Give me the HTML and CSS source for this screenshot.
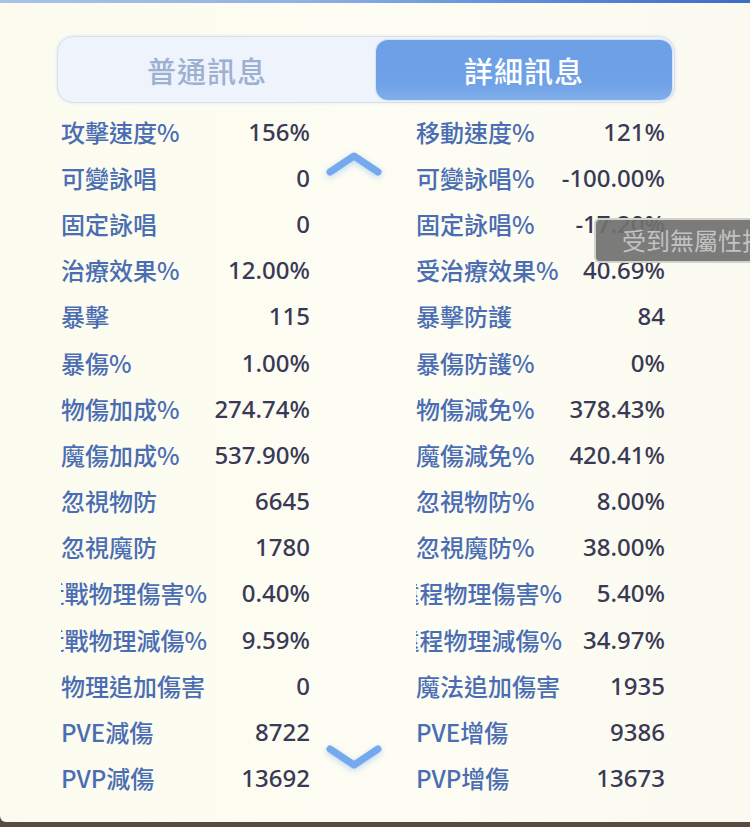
FILE: index.html
```html
<!DOCTYPE html>
<html lang="zh-Hant">
<head>
<meta charset="utf-8">
<title>詳細訊息</title>
<link rel="stylesheet" href="styles.css">
</head>
<body>
<div class="topbar"></div>
<div class="panel">
  <div class="tabs">
    <div class="tab">普通訊息</div>
    <div class="tab active">詳細訊息</div>
  </div>
  <div class="stats">
    <div class="col">
      <div class="row"><span class="label">攻擊速度%</span><span class="value">156%</span></div>
      <div class="row"><span class="label">可變詠唱</span><span class="value">0</span></div>
      <div class="row"><span class="label">固定詠唱</span><span class="value">0</span></div>
      <div class="row"><span class="label">治療效果%</span><span class="value">12.00%</span></div>
      <div class="row"><span class="label">暴擊</span><span class="value">115</span></div>
      <div class="row"><span class="label">暴傷%</span><span class="value">1.00%</span></div>
      <div class="row"><span class="label">物傷加成%</span><span class="value">274.74%</span></div>
      <div class="row"><span class="label">魔傷加成%</span><span class="value">537.90%</span></div>
      <div class="row"><span class="label">忽視物防</span><span class="value">6645</span></div>
      <div class="row"><span class="label">忽視魔防</span><span class="value">1780</span></div>
      <div class="row"><span class="label clip"><span>近戰物理傷害%</span></span><span class="value">0.40%</span></div>
      <div class="row"><span class="label clip"><span>近戰物理減傷%</span></span><span class="value">9.59%</span></div>
      <div class="row"><span class="label">物理追加傷害</span><span class="value">0</span></div>
      <div class="row"><span class="label">PVE減傷</span><span class="value">8722</span></div>
      <div class="row"><span class="label">PVP減傷</span><span class="value">13692</span></div>
    </div>
    <div class="arrows">
      <svg class="chev up" width="60" height="34" viewBox="0 0 60 34"><path d="M6 26 L30 10 L54 26" fill="none" stroke="#74a9ee" stroke-width="7" stroke-linecap="round" stroke-linejoin="round"/></svg>
      <svg class="chev down" width="60" height="34" viewBox="0 0 60 34"><path d="M6 8 L30 24 L54 8" fill="none" stroke="#74a9ee" stroke-width="7" stroke-linecap="round" stroke-linejoin="round"/></svg>
    </div>
    <div class="col">
      <div class="row"><span class="label">移動速度%</span><span class="value">121%</span></div>
      <div class="row"><span class="label">可變詠唱%</span><span class="value">-100.00%</span></div>
      <div class="row"><span class="label">固定詠唱%</span><span class="value">-17.20%</span></div>
      <div class="row"><span class="label">受治療效果%</span><span class="value">40.69%</span></div>
      <div class="row"><span class="label">暴擊防護</span><span class="value">84</span></div>
      <div class="row"><span class="label">暴傷防護%</span><span class="value">0%</span></div>
      <div class="row"><span class="label">物傷減免%</span><span class="value">378.43%</span></div>
      <div class="row"><span class="label">魔傷減免%</span><span class="value">420.41%</span></div>
      <div class="row"><span class="label">忽視物防%</span><span class="value">8.00%</span></div>
      <div class="row"><span class="label">忽視魔防%</span><span class="value">38.00%</span></div>
      <div class="row"><span class="label clip"><span>遠程物理傷害%</span></span><span class="value">5.40%</span></div>
      <div class="row"><span class="label clip"><span>遠程物理減傷%</span></span><span class="value">34.97%</span></div>
      <div class="row"><span class="label">魔法追加傷害</span><span class="value">1935</span></div>
      <div class="row"><span class="label">PVE增傷</span><span class="value">9386</span></div>
      <div class="row"><span class="label">PVP增傷</span><span class="value">13673</span></div>
    </div>
  </div>
  <div class="tooltip">受到無屬性技能傷害減少</div>
</div>
</body>
</html>
```
FILE: styles.css
```css
html, body {
  margin: 0;
  padding: 0;
  overflow: hidden;
}
body {
  width: 750px;
  height: 827px;
  background: #5a4a44;
  font-family: "Noto Sans", "Noto Sans CJK TC", sans-serif;
}
.topbar {
  height: 3px;
  background: linear-gradient(90deg, #a9c3e6 0%, #8fb2e3 40%, #5d8fda 70%, #3c6cc6 100%);
}
.panel {
  position: relative;
  height: 819px;
  background: linear-gradient(90deg, #fbfbef 0%, #fdfdf3 50%, #fafaf0 100%);
  border-bottom-left-radius: 6px;
  overflow: hidden;
  display: flex;
  flex-direction: column;
}
.tabs {
  margin: 33px 0 0 57px;
  width: 614px;
  height: 63px;
  padding: 1px;
  border: 1px solid #d6e0f2;
  border-radius: 16px;
  background: #eef3fc;
  display: flex;
  justify-content: space-between;
  align-items: center;
  box-shadow: 0 0 3px rgba(160, 185, 225, 0.35);
}
.tab {
  width: 296px;
  height: 60px;
  display: flex;
  align-items: center;
  justify-content: center;
  font-family: "Noto Sans CJK TC", "Noto Sans", sans-serif;
  font-size: 29px;
  font-weight: 500;
  color: #9cb0d2;
  letter-spacing: 1px;
}
.tab.active {
  background: linear-gradient(180deg, #6c9fe6 0%, #6fa1e7 70%, #80aeea 100%);
  color: #ffffff;
  border-radius: 12px;
  margin-right: 1px;
  box-shadow: 0 0 2px rgba(90, 140, 220, 0.5);
}
.stats {
  margin: 5px 0 0 61px;
  display: grid;
  grid-template-columns: 249px 106px 249px;
}
.row {
  height: 46.2px;
  display: flex;
  align-items: center;
  font-size: 24px;
  font-weight: 500;
  white-space: nowrap;
}
.label {
  width: 146px;
  margin-right: 2px;
  overflow: hidden;
  color: #4a6db3;
  font-family: "Noto Sans CJK TC", "Noto Sans", sans-serif;
}
.label.clip {
  display: flex;
  justify-content: flex-end;
}
.label.clip span {
  flex: none;
}
.value {
  flex: 1;
  text-align: right;
  color: #393955;
}
.arrows {
  display: flex;
  flex-direction: column;
  justify-content: space-between;
  align-items: center;
  padding: 38px 18px 26px 0;
}
.chev {
  filter: drop-shadow(0 2px 3px rgba(116, 169, 238, 0.45));
}
.tooltip {
  position: absolute;
  left: 594px;
  top: 215px;
  width: 200px;
  height: 45px;
  box-sizing: border-box;
  padding-left: 26px;
  background: rgba(112, 112, 112, 0.92);
  border: 2px solid #d2d2ca;
  border-right: none;
  border-radius: 6px 0 0 6px;
  color: #c2c2c2;
  font-family: "Noto Sans CJK TC", "Noto Sans", sans-serif;
  font-size: 24px;
  line-height: 40px;
  white-space: nowrap;
  overflow: hidden;
}
```
